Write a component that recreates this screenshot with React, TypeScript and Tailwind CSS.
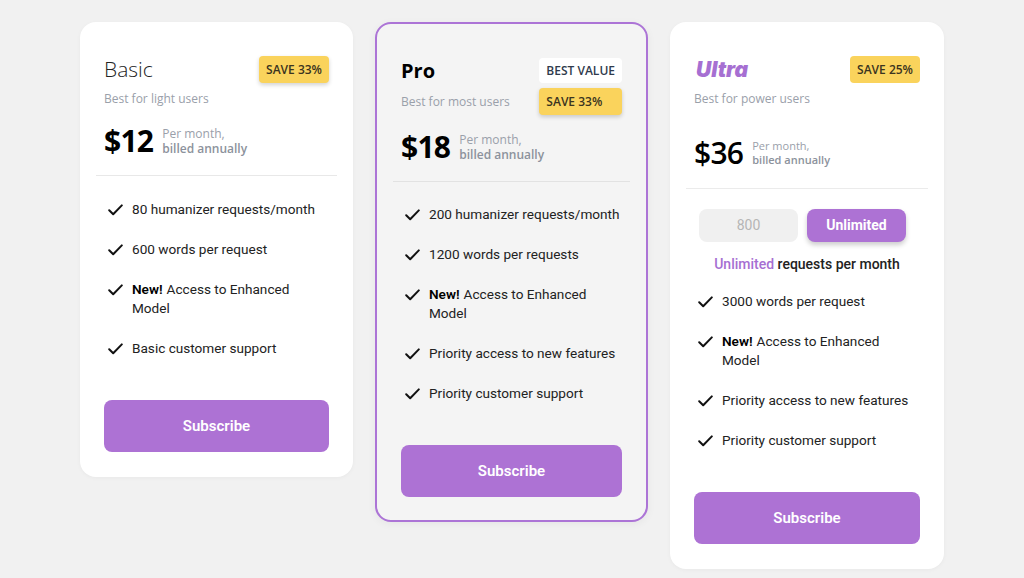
type Feature = { bold?: string; text: string; next?: string };

const heading = { fontFamily: '"Open Sans", Lato, sans-serif' };
const body = { fontFamily: 'Roboto, "Liberation Sans", sans-serif' };

const CheckMark = () => (
  <svg width="15" height="12" viewBox="0 0 15 12" fill="none" className="mt-[4px] shrink-0">
    <path d="M1.2 6.2 5.2 10.2 13.8 1.4" stroke="#111" strokeWidth="2" strokeLinecap="round" strokeLinejoin="round" />
  </svg>
);

const FeatureList = ({ items }: { items: Feature[] }) => (
  <ul className="flex flex-col gap-[21px] pl-[4px]" style={body}>
    {items.map((f, i) => (
      <li key={i} className="flex items-start gap-[9px] text-[13.6px] leading-[19px] text-[#222]">
        <CheckMark />
        <span>
          {f.bold && <b className="mr-[4px] font-semibold text-black">{f.bold}</b>}
          {f.text}
          {f.next && (
            <>
              <br />
              {f.next}
            </>
          )}
        </span>
      </li>
    ))}
  </ul>
);

const enhanced: Feature = { bold: "New!", text: "Access to Enhanced", next: "Model" };

const SaveBadge = ({ label, flat }: { label: string; flat?: boolean }) => (
  <span
    className={`flex h-[27px] items-center rounded-[4px] bg-[#fad35c] px-[7px] text-[12px] font-semibold text-[#3b3420] ${
      flat ? "" : "shadow-[0_2px_4px_rgba(0,0,0,0.18)]"
    }`}
    style={heading}
  >
    {label}
  </span>
);

const SubscribeButton = () => (
  <button
    className="mt-[42px] h-[52px] w-full rounded-[8px] bg-[#ad72d4] text-[15px] font-semibold text-white"
    style={body}
  >
    Subscribe
  </button>
);

const PriceRow = ({ price, small }: { price: string; small?: boolean }) => (
  <div className="flex h-[30px] items-center gap-[9px]">
    <span
      className={`text-[30px] leading-none tracking-tight text-black ${small ? "font-semibold" : "font-bold"}`}
      style={heading}
    >
      {price}
    </span>
    <div
      className={`flex flex-col text-[#9aa0aa] ${small ? "text-[11px] leading-[14px]" : "text-[12px] leading-[15px]"}`}
      style={heading}
    >
      <span>Per month,</span>
      <span className="font-semibold text-[#8c929c]">billed annually</span>
    </div>
  </div>
);

export default function App() {
  return (
    <div className="min-h-screen w-full bg-[#f1f1f1]">
      <div className="flex items-start justify-center gap-[22px] pt-[22px]">
        {/* Basic */}
        <div className="flex w-[273px] flex-col rounded-[16px] bg-white px-6 pt-[34px] pb-[25px] shadow-[0_1px_4px_rgba(0,0,0,0.04)]">
          <div className="grid grid-cols-[1fr_auto] items-center gap-y-[8px]">
            <span className="text-[21px] font-light leading-[27px] text-[#222]" style={heading}>
              Basic
            </span>
            <SaveBadge label="SAVE 33%" />
            <span className="col-span-2 text-[12px] leading-[16px] text-[#9aa0aa]" style={heading}>
              Best for light users
            </span>
          </div>
          <div className="mt-[19px]">
            <PriceRow price="$12" />
          </div>
          <div className="-mx-2 mt-[19px] h-px bg-[#e8e8e8]" />
          <div className="mt-[24px]">
            <FeatureList
              items={[
                { text: "80 humanizer requests/month" },
                { text: "600 words per request" },
                enhanced,
                { text: "Basic customer support" },
              ]}
            />
          </div>
          <SubscribeButton />
        </div>

        {/* Pro */}
        <div className="flex w-[273px] flex-col rounded-[16px] border-2 border-[#ac74d6] bg-[#f4f4f4] px-6 pt-[34px] pb-[23px] shadow-[0_2px_8px_rgba(0,0,0,0.05)]">
          <div className="grid grid-cols-[1fr_auto] items-center gap-y-[5px]">
            <span className="text-[20px] font-bold leading-[25px] text-black" style={heading}>
              Pro
            </span>
            <span
              className="flex h-[25px] items-center rounded-[4px] bg-white px-[7px] text-[12px] font-semibold text-[#2f3a4c]"
              style={heading}
            >
              BEST VALUE
            </span>
            <span className="text-[12px] leading-[16px] text-[#9aa0aa]" style={heading}>
              Best for most users
            </span>
            <SaveBadge label="SAVE 33%" />
          </div>
          <div className="mt-[17px]">
            <PriceRow price="$18" />
          </div>
          <div className="-mx-2 mt-[19px] h-px bg-[#e2e2e2]" />
          <div className="mt-[23px]">
            <FeatureList
              items={[
                { text: "200 humanizer requests/month" },
                { text: "1200 words per requests" },
                enhanced,
                { text: "Priority access to new features" },
                { text: "Priority customer support" },
              ]}
            />
          </div>
          <SubscribeButton />
        </div>

        {/* Ultra */}
        <div className="flex w-[274px] flex-col rounded-[16px] bg-white px-6 pt-[34px] pb-[25px] shadow-[0_1px_4px_rgba(0,0,0,0.04)]">
          <div className="grid grid-cols-[1fr_auto] items-center gap-y-[8px]">
            <span
              className="pl-[2px] text-[21px] font-black italic leading-[27px] text-[#a66fd2]"
              style={{ fontFamily: 'Inter, "Open Sans", sans-serif' }}
            >
              Ultra
            </span>
            <SaveBadge label="SAVE 25%" flat />
            <span className="col-span-2 text-[12px] leading-[16px] text-[#9aa0aa]" style={heading}>
              Best for power users
            </span>
          </div>
          <div className="mt-[31px]">
            <PriceRow price="$36" small />
          </div>
          <div className="-mx-2 mt-[20px] h-px bg-[#ebebeb]" />
          <div className="mt-[20px] ml-[5px] flex gap-[9px]" style={body}>
            <button className="h-[33px] w-[99px] rounded-[8px] bg-[#f0f0f0] text-[14px] text-[#b5b5b5]">
              800
            </button>
            <button className="h-[33px] w-[99px] rounded-[8px] bg-[#ad72d4] text-[14px] font-bold text-white shadow-[0_3px_5px_rgba(0,0,0,0.2)]">
              Unlimited
            </button>
          </div>
          <p className="mt-[12px] text-center text-[14px] font-medium leading-[20px] text-[#222]" style={body}>
            <span className="text-[#a66fd2]">Unlimited</span> requests per month
          </p>
          <div className="mt-[18px]">
            <FeatureList
              items={[
                { text: "3000 words per request" },
                enhanced,
                { text: "Priority access to new features" },
                { text: "Priority customer support" },
              ]}
            />
          </div>
          <SubscribeButton />
        </div>
      </div>
    </div>
  );
}
